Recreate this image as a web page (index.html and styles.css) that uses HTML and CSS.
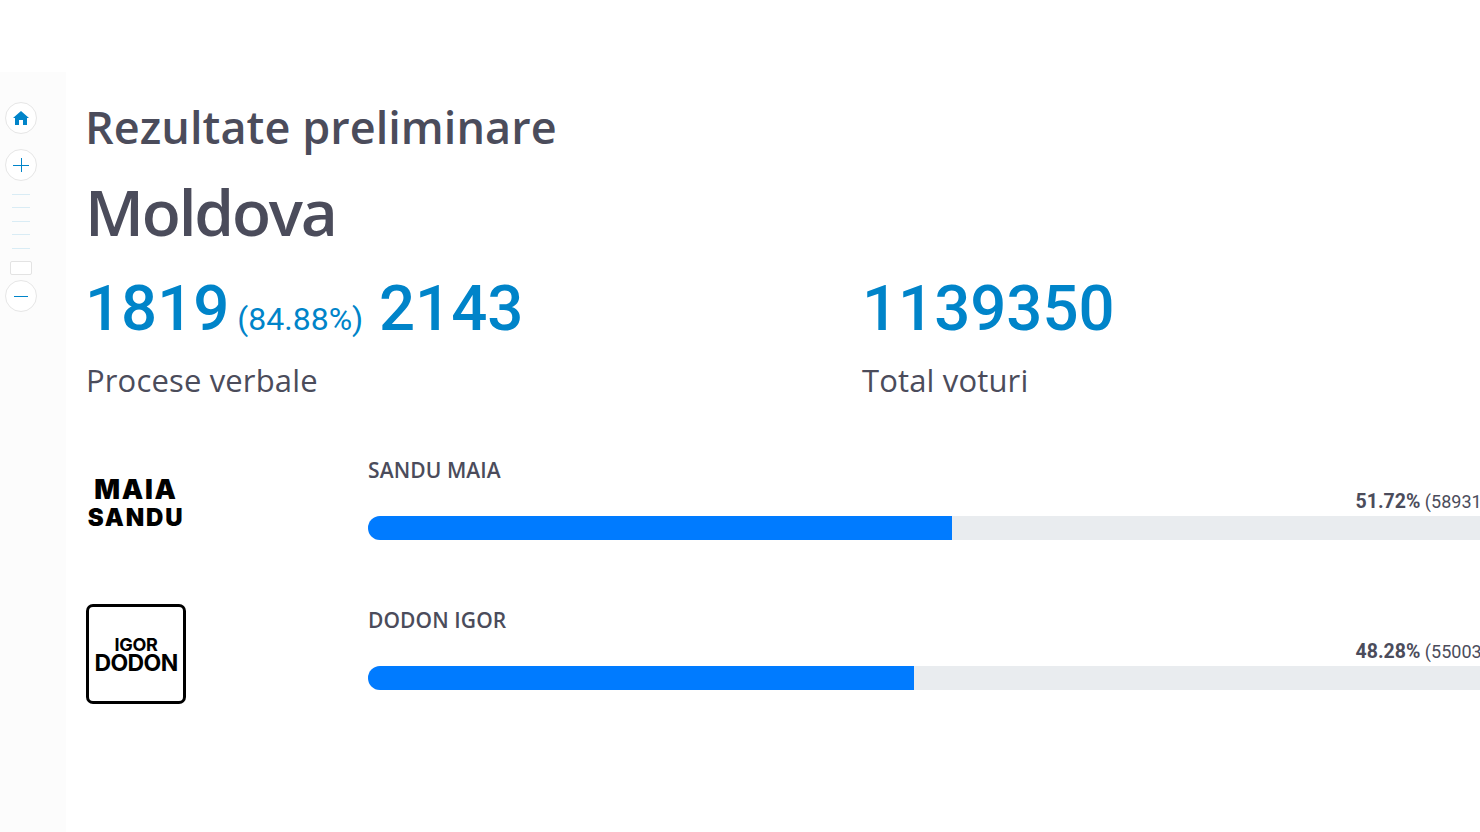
FILE: index.html
```html
<!DOCTYPE html>
<html lang="ro">
<head>
    <meta charset="UTF-8">
    <meta name="viewport" content="width=device-width, initial-scale=1.0">
    <title>Rezultate preliminare</title>
    <link rel="stylesheet" href="styles.css">
</head>
<body>
    <div class="page">
        <!-- map zoom controls -->
        <div class="sidebar">
            <div class="round-btn home-btn">
                <svg width="16" height="14" viewBox="0 0 16 14"><path fill="#0084c9" d="M8 0 L16 7 L14 7 L14 14 L10 14 L10 9 L6 9 L6 14 L2 14 L2 7 L0 7 Z"/></svg>
            </div>
            <div class="round-btn plus-btn">
                <svg width="16" height="16" viewBox="0 0 16 16"><path stroke="#0084c9" stroke-width="1" fill="none" d="M0 8.5 H16 M8.5 1 V15"/></svg>
            </div>
            <div class="ticks">
                <span class="tick"></span>
                <span class="tick"></span>
                <span class="tick"></span>
                <span class="tick"></span>
                <span class="tick"></span>
            </div>
            <div class="handle"></div>
            <div class="round-btn minus-btn">
                <svg width="16" height="16" viewBox="0 0 16 16"><path stroke="#0084c9" stroke-width="1" fill="none" d="M1 8.5 H15"/></svg>
            </div>
        </div>

        <div class="content">
            <h2 class="subtitle">Rezultate preliminare</h2>
            <h1 class="title">Moldova</h1>

            <div class="stats">
                <div class="stat stat-first">
                    <p class="stat-num">1819<small> (84.88%)</small> 2143</p>
                    <p class="stat-label">Procese verbale</p>
                </div>
                <div class="stat">
                    <p class="stat-num">1139350</p>
                    <p class="stat-label">Total voturi</p>
                </div>
            </div>

            <div class="candidate">
                <div class="logo-box">
                    <div class="logo-sandu"><span class="first">MAIA</span><span class="last">SANDU</span></div>
                </div>
                <div class="result">
                    <div class="name">SANDU MAIA</div>
                    <div class="value"><b>51.72%</b> (589316)</div>
                    <div class="bar"><div class="bar-fill" style="width: 51.72%"></div></div>
                </div>
            </div>

            <div class="candidate">
                <div class="logo-box">
                    <div class="logo-dodon"><span>IGOR</span><span class="big">DODON</span></div>
                </div>
                <div class="result">
                    <div class="name">DODON IGOR</div>
                    <div class="value"><b>48.28%</b> (550034)</div>
                    <div class="bar"><div class="bar-fill" style="width: 48.28%"></div></div>
                </div>
            </div>
        </div>
    </div>
</body>
</html>
```

FILE: styles.css
```css
html, body {
    margin: 0;
    padding: 0;
    height: 832px;
    overflow: hidden;
    background-color: #fff;
}

body {
    font-family: "Open Sans", sans-serif;
    color: #4b4c5b;
}

.page {
    display: flex;
    width: 1520px;
    height: 760px;
    margin-top: 72px;
}

.sidebar {
    width: 66px;
    flex-shrink: 0;
    box-sizing: border-box;
    padding: 30px 0 0 5px;
    background-color: #fcfcfc;
}

.round-btn {
    width: 32px;
    height: 32px;
    box-sizing: border-box;
    border: 1px solid #e6e6e6;
    border-radius: 50%;
    background-color: #fff;
    display: flex;
    align-items: center;
    justify-content: center;
}

.plus-btn {
    margin-top: 15px;
}

.ticks {
    display: flex;
    flex-direction: column;
    gap: 12.4px;
    margin: 13px 0 0 7px;
}

.tick {
    display: block;
    width: 18px;
    height: 1px;
    background-color: #d9ecf5;
}

.handle {
    width: 22px;
    height: 14px;
    box-sizing: border-box;
    margin: 12px 0 0 5px;
    border: 1px solid #e3e3e3;
    border-radius: 2px;
    background-color: #fff;
}

.minus-btn {
    margin-top: 5px;
}

.content {
    flex: 1;
    padding: 24px 22px 0 20px;
}

.subtitle {
    margin: 0 0 0 -1px;
    font-size: 45px;
    line-height: 62px;
    font-weight: 600;
    letter-spacing: 0.05px;
}

.title {
    margin: 14px 0 0 -1px;
    font-size: 64px;
    line-height: 80px;
    font-weight: 600;
    letter-spacing: -2.2px;
}

.stats {
    display: flex;
    margin-top: 19px;
}

.stat-first {
    width: 776px;
}

.stat-num {
    margin: 0 0 0 -1px;
    font-family: Roboto, sans-serif;
    font-size: 63.5px;
    line-height: 76px;
    font-weight: 500;
    color: #0084c9;
}

.stat-first + .stat .stat-num {
    margin-left: 0;
}

.stat-num small {
    font-size: 32px;
    line-height: 1;
    font-weight: 400;
}

.stat-label {
    margin: 13px 0 0;
    font-size: 31px;
    line-height: 40px;
    letter-spacing: 0.15px;
}

.candidate {
    display: flex;
    height: 150px;
}

.stats + .candidate {
    margin-top: 54px;
}

.logo-box {
    width: 100px;
    height: 100px;
    margin-right: 182px;
    flex-shrink: 0;
    display: flex;
    align-items: center;
    justify-content: center;
}

.logo-sandu {
    display: flex;
    flex-direction: column;
    align-items: center;
    font-family: Inter, sans-serif;
    font-weight: 900;
    line-height: 28px;
    color: #000;
}

.logo-sandu .first {
    font-size: 27px;
    letter-spacing: 1.7px;
}

.logo-sandu .last {
    font-size: 24px;
    letter-spacing: 1.8px;
}

.logo-dodon {
    width: 100px;
    height: 100px;
    box-sizing: border-box;
    border: 3px solid #000;
    border-radius: 7px;
    display: flex;
    flex-direction: column;
    align-items: center;
    justify-content: center;
    font-family: Inter, sans-serif;
    font-weight: 700;
    color: #000;
    font-size: 18px;
    line-height: 18px;
    letter-spacing: -0.3px;
}

.logo-dodon .big {
    font-size: 23px;
    letter-spacing: -0.6px;
}

.result {
    width: 1130px;
    flex-shrink: 0;
    padding-top: 2px;
}

.name {
    font-size: 21px;
    line-height: 28px;
    font-weight: 600;
    letter-spacing: 0.1px;
}

.value {
    margin-top: 4px;
    font-family: Roboto, sans-serif;
    font-size: 18px;
    line-height: 28px;
    text-align: right;
}

.value b {
    font-size: 19.5px;
    font-weight: 700;
}

.bar {
    height: 24px;
    border-radius: 12px;
    background-color: #e9ecef;
    overflow: hidden;
}

.bar-fill {
    height: 100%;
    background-color: #007bff;
}
```
